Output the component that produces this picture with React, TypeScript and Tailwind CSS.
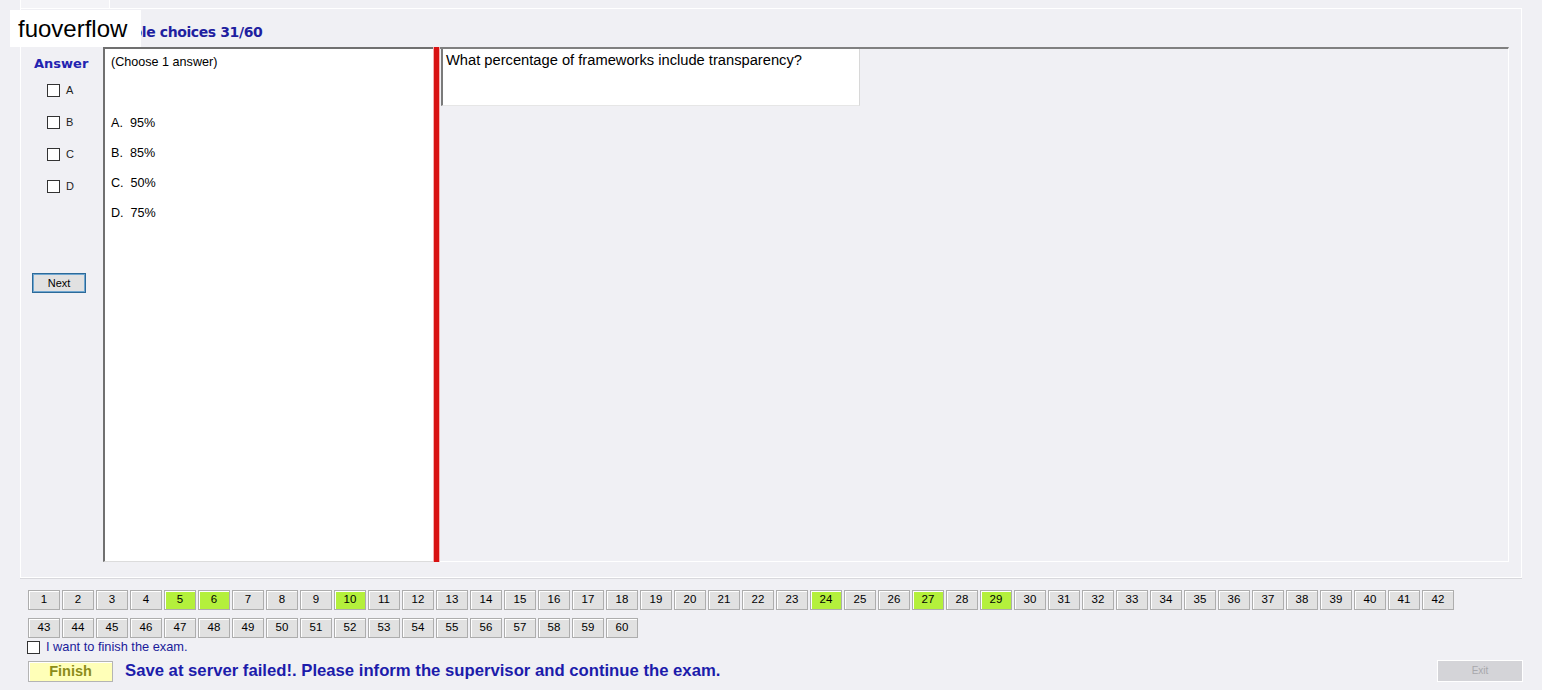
import React from "react";

const answered = [5, 6, 10, 24, 27, 29];
const options = [
  { key: "A", text: "95%" },
  { key: "B", text: "85%" },
  { key: "C", text: "50%" },
  { key: "D", text: "75%" },
];

const heading = { fontFamily: '"DejaVu Sans", Verdana, sans-serif' };

function Box({ className = "" }: { className?: string }) {
  return <span className={"block h-[13px] w-[13px] border border-[#333333] bg-white " + className} />;
}

function QuestionButton({ n }: { n: number }) {
  const done = answered.includes(n);
  return (
    <button
      className={
        "h-[20px] w-[32px] border border-[#adadad] text-[11.5px] leading-none text-black shadow-[inset_1px_1px_0_#ffffff] " +
        (done ? "bg-[#b4f03c]" : "bg-[#e1e1e1]")
      }
    >
      {n}
    </button>
  );
}

export default function App() {
  const row1 = Array.from({ length: 42 }, (_, i) => i + 1);
  const row2 = Array.from({ length: 18 }, (_, i) => i + 43);

  return (
    <div
      className="relative h-[690px] w-[1542px] overflow-hidden bg-[#f0f0f4] text-black"
      style={{ fontFamily: '"Liberation Sans", Arial, sans-serif' }}
    >
      {/* tab strip */}
      <div className="h-[8px]">
        <div className="ml-[20px] h-[8px] w-[90px] border-x border-white bg-[#f4f4f7]" />
      </div>

      {/* question group */}
      <div className="mx-[20px] flex h-[570px] flex-col border border-white shadow-[0_1px_0_#d8d8dc]">
        <div
          className="h-[16px] mt-[15px] mb-[7px] pl-[73px] text-[14px] font-bold leading-[16px] tracking-[-0.4px] text-[#1f1fa0]"
          style={heading}
        >
          Multiple choices 31/60
        </div>

        <div className="flex h-[515px]">
          {/* answer column */}
          <div className="flex w-[82px] flex-col">
            <div className="pt-[9px] pl-[13px] text-[13px] font-bold leading-[16px] text-[#2323b0]" style={heading}>
              Answer
            </div>
            <div className="mt-[12px] flex flex-col gap-[19px] pl-[26px]">
              {options.map((o) => (
                <div key={o.key} className="flex h-[13px] items-center gap-[6px]">
                  <Box />
                  <span className="text-[11px] leading-none text-[#222]">{o.key}</span>
                </div>
              ))}
            </div>
            <button className="ml-[11px] mt-[80px] h-[20px] w-[54px] border border-[#2c6a99] bg-[#e1e1e1] text-[11px] leading-none shadow-[inset_0_0_0_1px_#6fa6d0]">
              Next
            </button>
          </div>

          {/* options panel */}
          <div className="w-[330px] border-l-2 border-t-2 border-[#707070] border-b border-b-[#dcdcdc] bg-white pl-[6px] pt-[5px] text-[12.6px] leading-[16px]">
            <div>(Choose 1 answer)</div>
            <div className="mt-[45px] flex flex-col gap-[14px]">
              {options.map((o) => (
                <div key={o.key}>
                  {o.key}.&nbsp; {o.text}
                </div>
              ))}
            </div>
          </div>

          {/* splitter */}
          <div className="w-[7px] border-x border-[#f4b0b0] bg-[#d81212]" />

          {/* question panel */}
          <div className="flex-1 border-t-2 border-[#808080] border-r border-r-white border-b border-b-white">
            <div className="ml-[1px] h-[57px] w-[419px] border-l-2 border-[#7a7a7a] border-r border-r-[#d8d8d8] border-b border-b-[#e6e6e6] bg-white pl-[3px] pt-[2px] text-[14.7px] leading-[18px]">
              What percentage of frameworks include transparency?
            </div>
          </div>
          <div className="w-[12px]" />
        </div>
      </div>

      {/* question navigator */}
      <div className="ml-[28px] mt-[12px] flex flex-col gap-[8px]">
        <div className="flex gap-[2px]">
          {row1.map((n) => (
            <QuestionButton key={n} n={n} />
          ))}
        </div>
        <div className="flex gap-[2px]">
          {row2.map((n) => (
            <QuestionButton key={n} n={n} />
          ))}
        </div>
      </div>

      <div className="ml-[27px] mt-[2px] flex h-[14px] items-center gap-[6px]">
        <Box />
        <span className="text-[12.8px] leading-none text-[#1a1a9a]">I want to finish the exam.</span>
      </div>

      <div className="mt-[6px] flex h-[22px] items-center pr-[19px]">
        <button className="ml-[28px] h-[21px] w-[85px] border border-[#b4b4b4] bg-[#ffffb8] text-[14.5px] font-bold leading-none text-[#8c8c1a] shadow-[inset_1px_1px_0_#ffffff]">
          Finish
        </button>
        <span className="ml-[12px] text-[16.7px] font-bold leading-none text-[#1c1cab]">
          Save at server failed!. Please inform the supervisor and continue the exam.
        </span>
        <button className="ml-auto h-[22px] w-[86px] border border-white bg-[#d4d4d8] text-[10px] leading-none text-[#a8a8ac]">
          Exit
        </button>
      </div>

      {/* watermark */}
      <div className="absolute left-[10px] top-[10px] flex h-[37px] w-[131px] items-center bg-white pl-[8px] text-[24px] leading-none text-black">
        fuoverflow
      </div>
    </div>
  );
}
